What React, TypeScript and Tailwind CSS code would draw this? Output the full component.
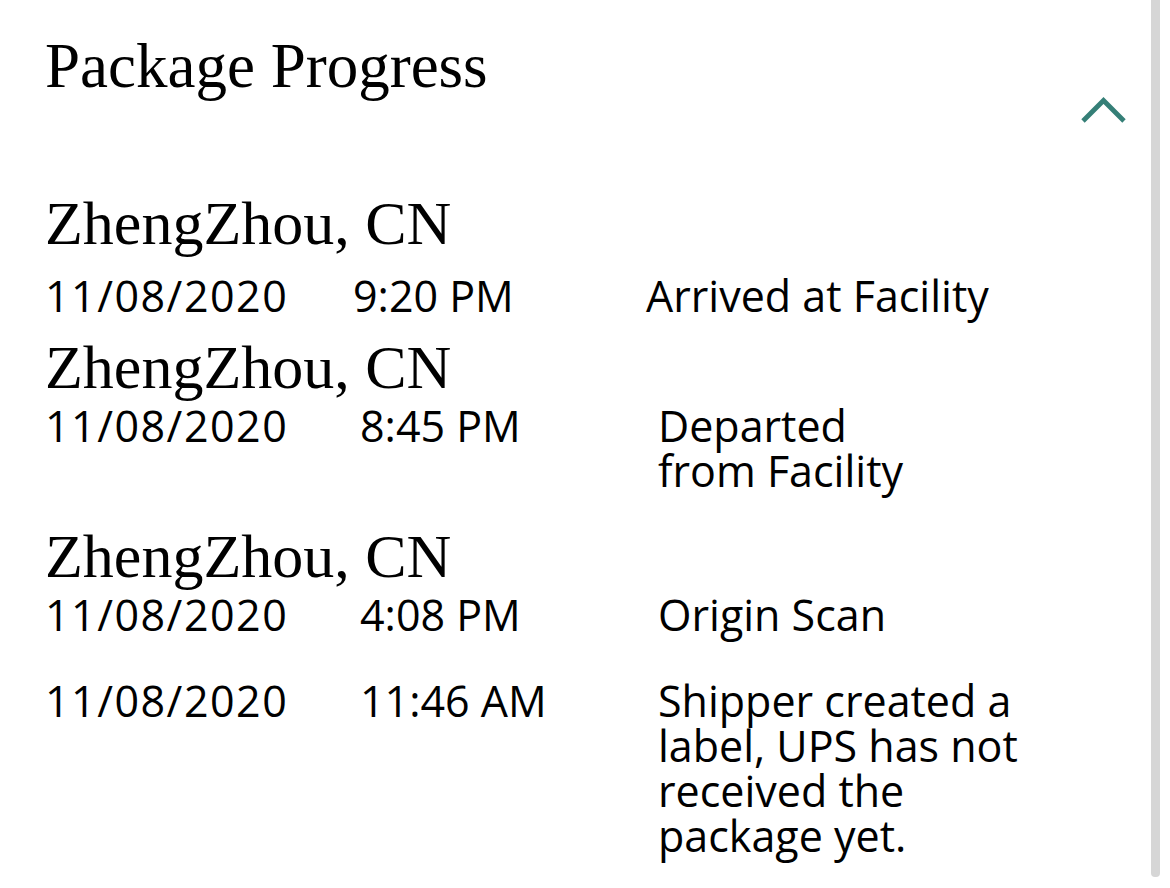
type Activity = {
  city?: string;
  date: string;
  time: string;
  desc: string;
  rowGap: string;
  dateGap: string;
  dateW: string;
  timeW: string;
};

// spacing per entry follows the screenshot, the first entry sits a bit looser
const ACTIVITY: Activity[] = [
  { city: 'ZhengZhou, CN', date: '11/08/2020', time: '9:20 PM', desc: 'Arrived at Facility', rowGap: 'mt-0', dateGap: 'mt-[17px]', dateW: 'w-[308px]', timeW: 'w-[293px]' },
  { city: 'ZhengZhou, CN', date: '11/08/2020', time: '8:45 PM', desc: 'Departed\nfrom Facility', rowGap: 'mt-[16px]', dateGap: 'mt-[3px]', dateW: 'w-[315px]', timeW: 'w-[298px]' },
  { city: 'ZhengZhou, CN', date: '11/08/2020', time: '4:08 PM', desc: 'Origin Scan', rowGap: 'mt-[30px]', dateGap: 'mt-[3px]', dateW: 'w-[315px]', timeW: 'w-[298px]' },
  { date: '11/08/2020', time: '11:46 AM', desc: 'Shipper created a label, UPS has not received the package yet.', rowGap: 'mt-[41px]', dateGap: 'mt-0', dateW: 'w-[315px]', timeW: 'w-[298px]' },
];

const serif = 'font-["Liberation_Serif",serif]';
const sans = 'font-["Open_Sans",sans-serif]';

function Chevron() {
  return (
    <svg width="47" height="32" viewBox="0 0 47 32" fill="none" className="mt-[94px] text-[#357f77]">
      <polyline points="3,27 23.5,6.5 44,27" stroke="currentColor" strokeWidth="4.8" strokeLinejoin="miter" />
    </svg>
  );
}

export default function App() {
  return (
    <div className="relative w-[1170px] h-[888px] overflow-hidden bg-white text-black">
      {/* overlay scroll thumb */}
      <div className="absolute top-0 right-[10px] w-[9px] h-[877px] bg-[#d6d6d6] rounded-b-[4px]" />

      <div className="flex items-start justify-between h-[150px] pl-[45px] pr-[43px]">
        <h2 className={`${serif} pt-[28px] text-[63px] leading-[76px]`}>Package Progress</h2>
        <button aria-label="Collapse">
          <Chevron />
        </button>
      </div>

      <div className="mt-[40px] pl-[45px]">
        {ACTIVITY.map((a, i) => (
          <div key={i} className={a.rowGap}>
            {a.city && <div className={`${serif} text-[62px] leading-[66px]`}>{a.city}</div>}
            <div className={`flex items-start ${a.dateGap} ${sans} text-[43px] leading-[45px]`}>
              <div className={`${a.dateW} tracking-[1.5px]`}>{a.date}</div>
              <div className={a.timeW}>{a.time}</div>
              <div className="w-[370px] whitespace-pre-line">{a.desc}</div>
            </div>
          </div>
        ))}
      </div>
    </div>
  );
}
